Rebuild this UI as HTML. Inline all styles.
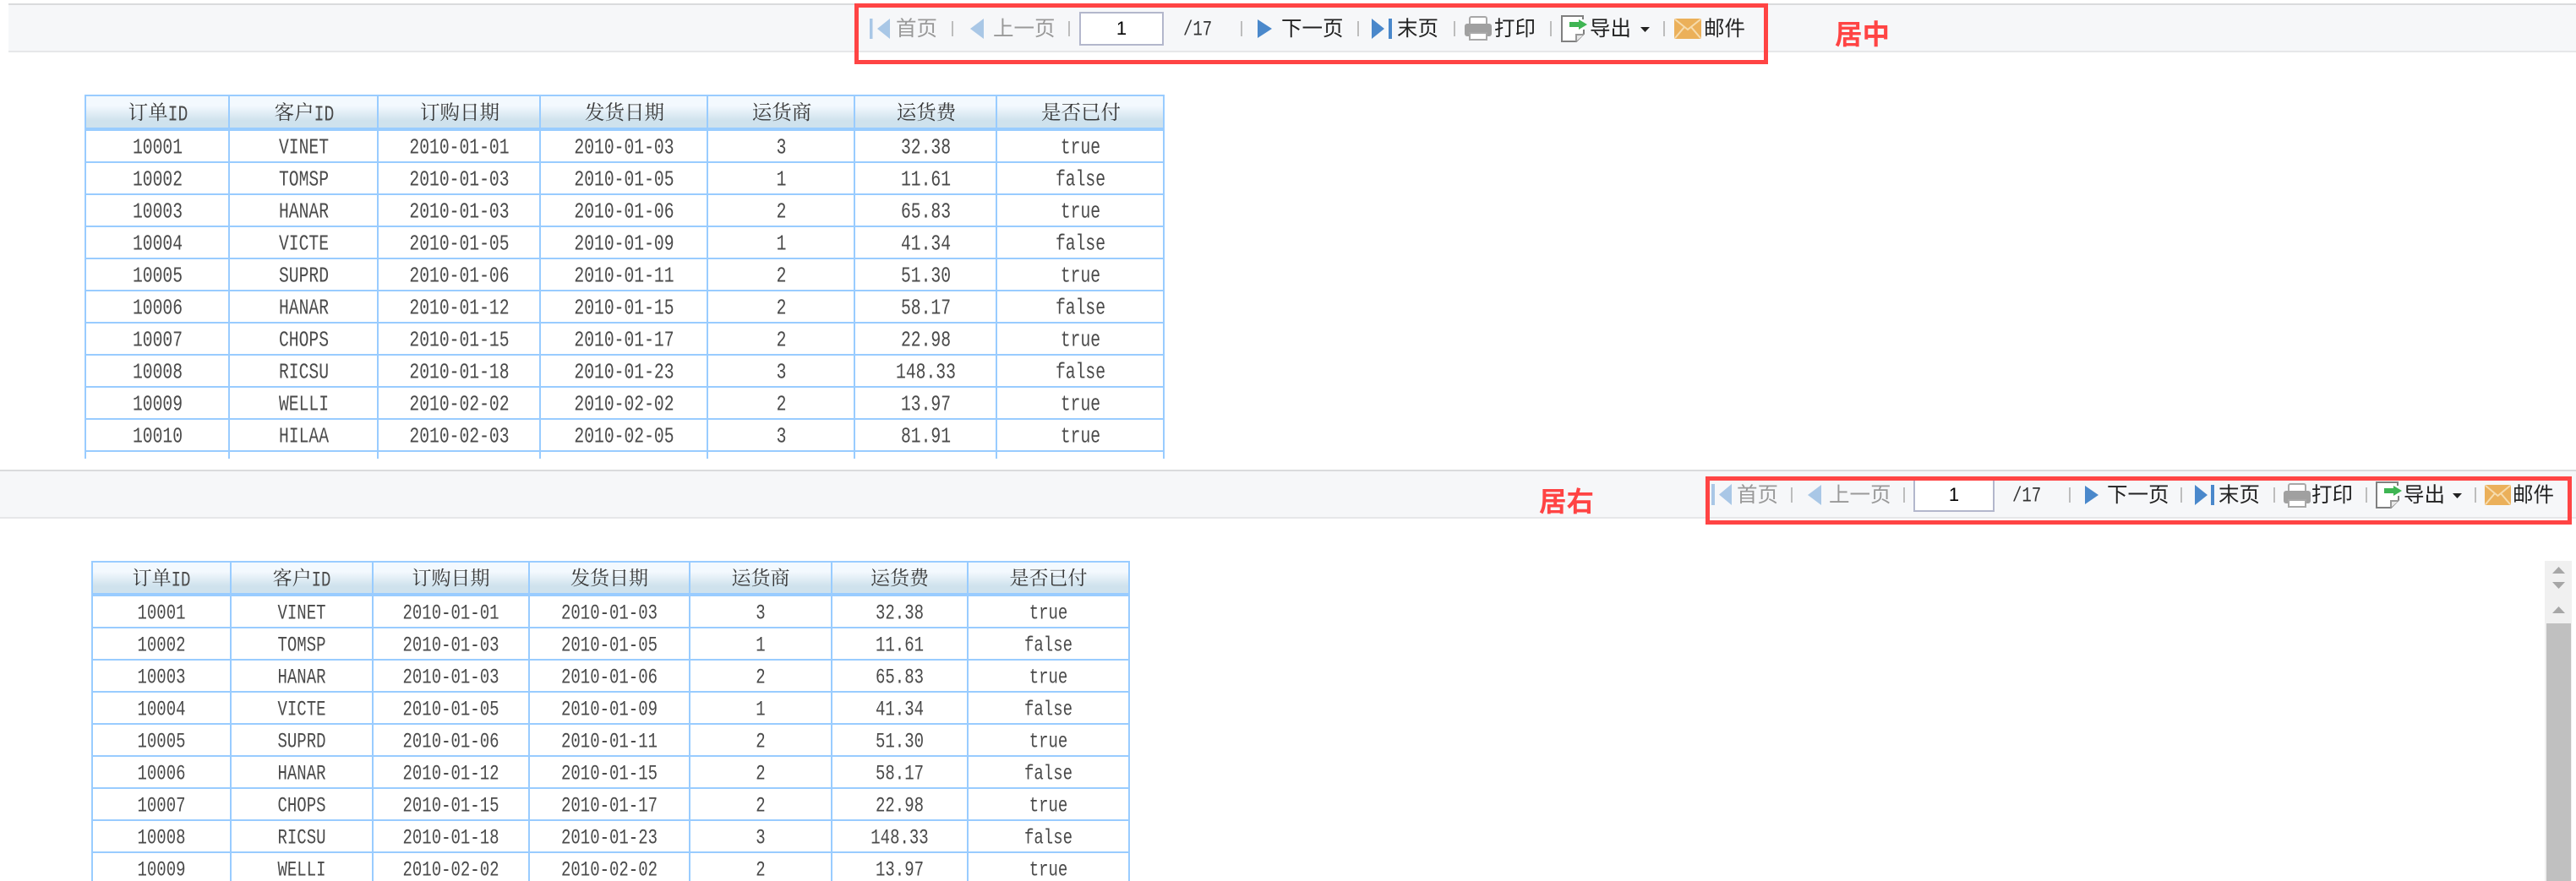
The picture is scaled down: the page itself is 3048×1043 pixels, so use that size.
<!DOCTYPE html>
<html lang="zh-CN"><head><meta charset="utf-8"><title>报表工具栏对齐</title>
<style>
html,body{margin:0;padding:0;width:3048px;height:1043px;overflow:hidden;background:#fff}
body{position:relative;font-family:"Liberation Sans","Noto Sans CJK SC",sans-serif}
.bar{position:absolute;box-sizing:border-box;background:#f6f7f9;border-top:2px solid #dadbdd;border-bottom:2px solid #e6e7e9}
.t{position:absolute;font-family:"Liberation Sans","Noto Sans CJK SC",sans-serif;font-size:24.5px;line-height:32px;color:#222;white-space:nowrap;transform:translate(-1px,1px)}
.d{color:#999}
.s{position:absolute;width:2px;height:18px;background:#bdbdbd}
svg{position:absolute;display:block}
.num{position:absolute;font-family:"Liberation Mono",monospace;font-size:19px;line-height:24px;color:#333;transform:scaleY(1.3)}
input{position:absolute;box-sizing:border-box;height:40px;border:2px solid #b3b7cc;background:#fff;padding:0;text-align:center;font:22px "Liberation Sans",sans-serif;color:#000;outline:0}
.box{position:absolute;box-sizing:border-box;border:5px solid #ff4444;z-index:5}
.lab{position:absolute;font-family:"Liberation Sans","Noto Sans CJK SC",sans-serif;font-weight:700;font-size:32.5px;line-height:36px;color:#ff4444;z-index:5}
.wrap{position:absolute;overflow:hidden}
table{border-collapse:collapse;table-layout:fixed;position:absolute;left:0;top:0}
th,td{box-sizing:border-box;border:2px solid #9cf;padding:0;text-align:center;overflow:hidden;color:#444;font-weight:400}
th{height:39px;padding-bottom:3px;border-bottom-width:4px;background:linear-gradient(#f3f9fe 0,#f3f9fe 30%,#cfe2ed 78%,#cfe2ed 100%);font-family:"Noto Serif CJK SC",serif;color:#3a3a3a}
td{height:38px;font-family:"Liberation Mono",monospace}
tr:nth-child(2) td{height:39px}
td span,th b{display:inline-block;font-family:"Liberation Mono",monospace;font-weight:400;line-height:1;color:#4a4a4a}
td span{transform:translateY(2px) scaleY(1.33)}
th b{transform:scaleY(1.33)}
.a th{font-size:23.5px}.a td,.a th b{font-size:19.7px}
.a td span{transform:translate(0.5px,2px) scaleY(1.33)}
.a th{padding-left:2px}
.b th{font-size:23px}.b td,.b th b{font-size:19px}
.sb{position:absolute;left:3011px;top:664px;width:32px;height:379px;background:#f0f0f0}
.th{position:absolute;left:2px;top:74px;width:29px;height:305px;background:#c0c0c0}
</style></head><body>

<!-- 居中 toolbar -->
<div class="bar" style="left:10px;top:4px;width:3038px;height:58px"></div>
<svg style="left:1029px;top:22px" width="24" height="24"><rect x="0" y="0" width="3.5" height="24" fill="#a9c7e6"/><path d="M24 0V24L9 12Z" fill="#a9c7e6"/></svg>
<span class="t d" style="left:1061px;top:18px">首页</span>
<i class="s" style="left:1126px;top:25px"></i>
<svg style="left:1148px;top:22px" width="16" height="24"><path d="M16 0V24L0 12Z" fill="#a9c7e6"/></svg>
<span class="t d" style="left:1176px;top:18px">上一页</span>
<i class="s" style="left:1264px;top:25px"></i>
<input style="left:1277px;top:14px;width:100px" value="1">
<span class="num" style="left:1400px;top:23px">/17</span>
<i class="s" style="left:1468px;top:25px"></i>
<svg style="left:1488px;top:23px" width="17" height="22"><path d="M0 0V22L17 11Z" fill="#4a88cb"/></svg>
<span class="t" style="left:1517px;top:18px">下一页</span>
<i class="s" style="left:1606px;top:25px"></i>
<svg style="left:1623px;top:22px" width="24" height="24"><path d="M0 0V24L15 12Z" fill="#4a88cb"/><rect x="20" y="0" width="4" height="24" fill="#4a88cb"/></svg>
<span class="t" style="left:1654px;top:18px">末页</span>
<i class="s" style="left:1720px;top:25px"></i>
<svg style="left:1733px;top:19px" width="32" height="29"><rect x="6" y="1" width="20" height="10" rx="2" fill="#fff" stroke="#a8a8a8" stroke-width="2"/><rect x="0" y="9" width="32" height="15" rx="3" fill="#a0a0a0"/><rect x="6" y="20" width="20" height="8" fill="#fff" stroke="#a8a8a8" stroke-width="2"/></svg>
<span class="t" style="left:1769px;top:18px">打印</span>
<i class="s" style="left:1834px;top:25px"></i>
<svg style="left:1847px;top:18px" width="32" height="32"><path d="M26 5V1H1V31H18L27 22V17" fill="#fff" stroke="#808080" stroke-width="2"/><path d="M18 31V23H27" fill="#e8e8e8" stroke="#999" stroke-width="2"/><path d="M10 8H21V5L31 11 21 17V14H10Z" fill="#3fb553"/></svg>
<span class="t" style="left:1882px;top:18px">导出</span>
<svg style="left:1941px;top:32px" width="11" height="6"><path d="M0 0H11L5.5 6Z" fill="#222"/></svg>
<i class="s" style="left:1968px;top:25px"></i>
<svg style="left:1981px;top:22px" width="32" height="24"><rect width="32" height="24" rx="2" fill="#ebb05a"/><path d="M1 1L16 13 31 1M1 23L12 10M31 23L20 10" fill="none" stroke="#f6dcae" stroke-width="2"/></svg>
<span class="t" style="left:2017px;top:18px">邮件</span>

<div class="box" style="left:1011px;top:4px;width:1081px;height:72px"></div>
<div class="lab" style="left:2171px;top:23px">居中</div>

<!-- 表格 1 -->
<div class="wrap" style="left:100px;top:112px;width:1280px;height:431px">
<table class="a" style="width:1278px">
<colgroup><col style="width:170px"><col style="width:176px"><col style="width:192px"><col style="width:198px"><col style="width:174px"><col style="width:168px"><col style="width:198px"></colgroup>
<tr><th>订单<b>ID</b></th><th>客户<b>ID</b></th><th>订购日期</th><th>发货日期</th><th>运货商</th><th>运货费</th><th>是否已付</th></tr>
<tr><td><span>10001</span></td><td><span>VINET</span></td><td><span>2010-01-01</span></td><td><span>2010-01-03</span></td><td><span>3</span></td><td><span>32.38</span></td><td><span>true</span></td></tr>
<tr><td><span>10002</span></td><td><span>TOMSP</span></td><td><span>2010-01-03</span></td><td><span>2010-01-05</span></td><td><span>1</span></td><td><span>11.61</span></td><td><span>false</span></td></tr>
<tr><td><span>10003</span></td><td><span>HANAR</span></td><td><span>2010-01-03</span></td><td><span>2010-01-06</span></td><td><span>2</span></td><td><span>65.83</span></td><td><span>true</span></td></tr>
<tr><td><span>10004</span></td><td><span>VICTE</span></td><td><span>2010-01-05</span></td><td><span>2010-01-09</span></td><td><span>1</span></td><td><span>41.34</span></td><td><span>false</span></td></tr>
<tr><td><span>10005</span></td><td><span>SUPRD</span></td><td><span>2010-01-06</span></td><td><span>2010-01-11</span></td><td><span>2</span></td><td><span>51.30</span></td><td><span>true</span></td></tr>
<tr><td><span>10006</span></td><td><span>HANAR</span></td><td><span>2010-01-12</span></td><td><span>2010-01-15</span></td><td><span>2</span></td><td><span>58.17</span></td><td><span>false</span></td></tr>
<tr><td><span>10007</span></td><td><span>CHOPS</span></td><td><span>2010-01-15</span></td><td><span>2010-01-17</span></td><td><span>2</span></td><td><span>22.98</span></td><td><span>true</span></td></tr>
<tr><td><span>10008</span></td><td><span>RICSU</span></td><td><span>2010-01-18</span></td><td><span>2010-01-23</span></td><td><span>3</span></td><td><span>148.33</span></td><td><span>false</span></td></tr>
<tr><td><span>10009</span></td><td><span>WELLI</span></td><td><span>2010-02-02</span></td><td><span>2010-02-02</span></td><td><span>2</span></td><td><span>13.97</span></td><td><span>true</span></td></tr>
<tr><td><span>10010</span></td><td><span>HILAA</span></td><td><span>2010-02-03</span></td><td><span>2010-02-05</span></td><td><span>3</span></td><td><span>81.91</span></td><td><span>true</span></td></tr>
<tr><td></td><td></td><td></td><td></td><td></td><td></td><td></td></tr>
</table></div>

<!-- 居右 toolbar -->
<div class="bar" style="left:0;top:556px;width:3048px;height:58px"></div>
<svg style="left:2025px;top:573px" width="24" height="25"><rect width="4" height="25" fill="#a9c7e6"/><path d="M24 0V25L9 12.500Z" fill="#a9c7e6"/></svg>
<span class="t d" style="left:2056px;top:570px">首页</span>
<i class="s" style="left:2119px;top:577px"></i>
<svg style="left:2139px;top:574px" width="16" height="24"><path d="M16 0V24L0 12Z" fill="#a9c7e6"/></svg>
<span class="t d" style="left:2165px;top:570px">上一页</span>
<i class="s" style="left:2252px;top:577px"></i>
<input style="left:2264px;top:566px;width:96px" value="1">
<span class="num" style="left:2381px;top:575px">/17</span>
<i class="s" style="left:2448px;top:577px"></i>
<svg style="left:2467px;top:575px" width="16" height="22"><path d="M0 0V22L16 11Z" fill="#4a88cb"/></svg>
<span class="t" style="left:2494px;top:570px">下一页</span>
<i class="s" style="left:2580px;top:577px"></i>
<svg style="left:2597px;top:574px" width="23" height="24"><path d="M0 0V24L15 12Z" fill="#4a88cb"/><rect x="19" width="4" height="24" fill="#4a88cb"/></svg>
<span class="t" style="left:2626px;top:570px">末页</span>
<i class="s" style="left:2690px;top:577px"></i>
<svg style="left:2702px;top:572px" width="32" height="29"><rect x="6" y="1" width="20" height="10" rx="2" fill="#fff" stroke="#a8a8a8" stroke-width="2"/><rect x="0" y="9" width="32" height="15" rx="3" fill="#a0a0a0"/><rect x="6" y="20" width="20" height="8" fill="#fff" stroke="#a8a8a8" stroke-width="2"/></svg>
<span class="t" style="left:2736px;top:570px">打印</span>
<i class="s" style="left:2799px;top:577px"></i>
<svg style="left:2811px;top:570px" width="32" height="32"><path d="M26 5V1H1V31H18L27 22V17" fill="#fff" stroke="#808080" stroke-width="2"/><path d="M18 31V23H27" fill="#e8e8e8" stroke="#999" stroke-width="2"/><path d="M10 8H21V5L31 11 21 17V14H10Z" fill="#3fb553"/></svg>
<span class="t" style="left:2845px;top:570px">导出</span>
<svg style="left:2902px;top:584px" width="11" height="6"><path d="M0 0H11L5.500 6Z" fill="#222"/></svg>
<i class="s" style="left:2928px;top:577px"></i>
<svg style="left:2940px;top:574px" width="31" height="24"><rect width="31" height="24" rx="2" fill="#ebb05a"/><path d="M1 1L15.500 13 30 1M1 23L12 10M30 23L19 10" fill="none" stroke="#f6dcae" stroke-width="2"/></svg>
<span class="t" style="left:2974px;top:570px">邮件</span>

<div class="box" style="left:2018px;top:564px;width:1025px;height:57px"></div>
<div class="lab" style="left:1821px;top:576px">居右</div>

<!-- 表格 2 -->
<div class="wrap" style="left:108px;top:664px;width:1232px;height:379px">
<table class="b" style="width:1229px">
<colgroup><col style="width:164px"><col style="width:168px"><col style="width:185px"><col style="width:190px"><col style="width:168px"><col style="width:161px"><col style="width:191px"></colgroup>
<tr><th>订单<b>ID</b></th><th>客户<b>ID</b></th><th>订购日期</th><th>发货日期</th><th>运货商</th><th>运货费</th><th>是否已付</th></tr>
<tr><td><span>10001</span></td><td><span>VINET</span></td><td><span>2010-01-01</span></td><td><span>2010-01-03</span></td><td><span>3</span></td><td><span>32.38</span></td><td><span>true</span></td></tr>
<tr><td><span>10002</span></td><td><span>TOMSP</span></td><td><span>2010-01-03</span></td><td><span>2010-01-05</span></td><td><span>1</span></td><td><span>11.61</span></td><td><span>false</span></td></tr>
<tr><td><span>10003</span></td><td><span>HANAR</span></td><td><span>2010-01-03</span></td><td><span>2010-01-06</span></td><td><span>2</span></td><td><span>65.83</span></td><td><span>true</span></td></tr>
<tr><td><span>10004</span></td><td><span>VICTE</span></td><td><span>2010-01-05</span></td><td><span>2010-01-09</span></td><td><span>1</span></td><td><span>41.34</span></td><td><span>false</span></td></tr>
<tr><td><span>10005</span></td><td><span>SUPRD</span></td><td><span>2010-01-06</span></td><td><span>2010-01-11</span></td><td><span>2</span></td><td><span>51.30</span></td><td><span>true</span></td></tr>
<tr><td><span>10006</span></td><td><span>HANAR</span></td><td><span>2010-01-12</span></td><td><span>2010-01-15</span></td><td><span>2</span></td><td><span>58.17</span></td><td><span>false</span></td></tr>
<tr><td><span>10007</span></td><td><span>CHOPS</span></td><td><span>2010-01-15</span></td><td><span>2010-01-17</span></td><td><span>2</span></td><td><span>22.98</span></td><td><span>true</span></td></tr>
<tr><td><span>10008</span></td><td><span>RICSU</span></td><td><span>2010-01-18</span></td><td><span>2010-01-23</span></td><td><span>3</span></td><td><span>148.33</span></td><td><span>false</span></td></tr>
<tr><td><span>10009</span></td><td><span>WELLI</span></td><td><span>2010-02-02</span></td><td><span>2010-02-02</span></td><td><span>2</span></td><td><span>13.97</span></td><td><span>true</span></td></tr>
</table></div>

<!-- 滚动条 -->
<div class="sb">
<svg style="left:9px;top:7px" width="15" height="8"><path d="M7.500 0L15 8H0Z" fill="#a6a6a6"/></svg>
<svg style="left:9px;top:25px" width="15" height="8"><path d="M0 0H15L7.500 8Z" fill="#a6a6a6"/></svg>
<svg style="left:9px;top:54px" width="15" height="8"><path d="M7.500 0L15 8H0Z" fill="#a6a6a6"/></svg>
<div class="th"></div>
</div>
</body></html>
